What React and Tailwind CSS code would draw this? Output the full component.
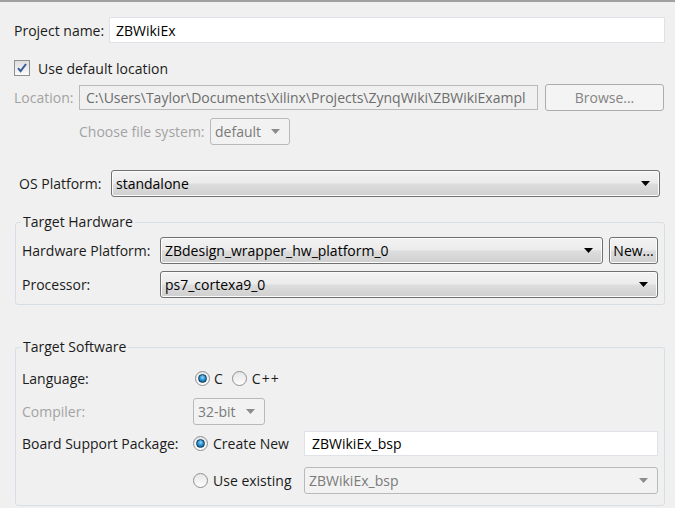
import React from "react";

const font = { fontFamily: '"Open Sans", "Noto Sans", sans-serif' };

const Arrow = ({ disabled }) => (
  <svg width="9" height="5" viewBox="0 0 9 5" className="shrink-0">
    <path d="M0 0 H9 L4.5 5 Z" fill={disabled ? "#8c8c8c" : "#000"} />
  </svg>
);

const Combo = ({ value, className = "", disabled = false }) =>
  disabled ? (
    <div
      className={`flex items-center justify-between h-[27px] pl-[4px] pr-[9px] border border-[#b9b9b9] rounded-[3px] bg-[#f2f2f2] text-[#7a7a7a] ${className}`}
    >
      <span>{value}</span>
      <Arrow disabled />
    </div>
  ) : (
    <div
      className={`flex items-center justify-between h-[27px] pl-[4px] pr-[9px] border border-[#707070] rounded-[3px] text-black bg-[linear-gradient(to_bottom,#f3f3f3_0%,#ebebeb_48%,#dddddd_52%,#cfcfcf_100%)] shadow-[inset_0_0_0_1px_#fcfcfc] ${className}`}
    >
      <span>{value}</span>
      <Arrow />
    </div>
  );

const Radio = ({ checked }) => (
  <div className="w-[15px] h-[15px] rounded-full border border-[#8e8f8f] bg-[linear-gradient(to_bottom,#e6e6e6,#fdfdfd)] flex items-center justify-center shrink-0">
    {checked && (
      <div className="w-[9px] h-[9px] rounded-full border border-[#103f5e] bg-[radial-gradient(circle_at_50%_35%,#8fd6ff_0%,#1d86c5_55%,#0d4f7d_100%)]" />
    )}
  </div>
);

const App = () => {
  return (
    <div
      className="w-[675px] h-[508px] overflow-hidden bg-[#f0f0f0] border-t-2 border-[#a0a0a0] text-[14px] text-[#1b1b1b]"
      style={font}
    >
      {/* Project name */}
      <div className="flex items-center pl-[14px] pr-[10px] mt-[15px]">
        <span className="w-[95px] shrink-0">Project name:</span>
        <div className="flex-1 h-[26px] flex items-center pl-[6px] bg-white border border-[#dfe3e8] text-black">
          ZBWikiEx
        </div>
      </div>

      {/* Default location */}
      <div className="flex items-center pl-[14px] mt-[17px] h-[16px]">
        <div className="w-[16px] h-[16px] border border-[#8e8f8f] bg-[linear-gradient(to_bottom,#dedede,#fbfbfb)] flex items-center justify-center shrink-0">
          <svg width="12" height="12" viewBox="0 0 12 12">
            <path d="M2 6.2 L4.6 9.2 L10 2" fill="none" stroke="#3b5a9a" strokeWidth="2" />
          </svg>
        </div>
        <span className="ml-[8px]">Use default location</span>
      </div>

      {/* Location */}
      <div className="flex items-center pl-[14px] pr-[11px] mt-[8px] h-[27px]">
        <span className="w-[65px] shrink-0 text-[#a3a3a3]">Location:</span>
        <div className="flex-1 h-[25px] flex items-center pl-[6px] bg-[#f0f0f0] border border-[#b9b9b9] text-[#6d6d6d] overflow-hidden whitespace-nowrap">
          C:\Users\Taylor\Documents\Xilinx\Projects\ZynqWiki\ZBWikiExampl
        </div>
        <div className="ml-[7px] w-[119px] h-[27px] flex items-center justify-center border border-[#adadad] rounded-[3px] bg-[#f4f4f4] text-[#838383]">
          Browse...
        </div>
      </div>

      {/* File system */}
      <div className="flex items-center pl-[79px] mt-[7px]">
        <span className="w-[131px] shrink-0 text-[#a3a3a3]">Choose file system:</span>
        <Combo value="default" disabled className="w-[80px]" />
      </div>

      {/* OS Platform */}
      <div className="flex items-center pl-[19px] pr-[15px] mt-[25px]">
        <span className="w-[92px] shrink-0">OS Platform:</span>
        <Combo value="standalone" className="flex-1" />
      </div>

      {/* Target Hardware */}
      <fieldset className="mx-[10px] ml-[15px] mt-[15px] border border-[#d5dfe5] rounded-[3px] px-[6px] pb-[6px]">
        <legend className="-ml-[1px] px-[2px] leading-[20px]">Target Hardware</legend>
        <div className="flex items-center mt-[5px]">
          <span className="w-[138px] shrink-0">Hardware Platform:</span>
          <Combo value="ZBdesign_wrapper_hw_platform_0" className="flex-1" />
          <div className="ml-[6px] w-[49px] h-[27px] flex items-center justify-center border border-[#707070] rounded-[3px] bg-[linear-gradient(to_bottom,#f3f3f3_0%,#ebebeb_48%,#dddddd_52%,#cfcfcf_100%)] shadow-[inset_0_0_0_1px_#fcfcfc] text-black">
            New...
          </div>
        </div>
        <div className="flex items-center mt-[7px]">
          <span className="w-[138px] shrink-0">Processor:</span>
          <Combo value="ps7_cortexa9_0" className="flex-1" />
        </div>
      </fieldset>

      {/* Target Software */}
      <fieldset className="mx-[10px] ml-[15px] mt-[32px] border border-[#d5dfe5] rounded-[3px] px-[6px] pb-[11px]">
        <legend className="-ml-[1px] px-[2px] leading-[20px]">Target Software</legend>
        <div className="flex items-center mt-[11px] h-[20px]">
          <span className="w-[173px] shrink-0">Language:</span>
          <div className="flex items-center">
            <Radio checked />
            <span className="ml-[4px]">C</span>
            <div className="ml-[9px]">
              <Radio />
            </div>
            <span className="ml-[5px] tracking-[1px]">C++</span>
          </div>
        </div>
        <div className="flex items-center mt-[10px]">
          <span className="w-[171px] shrink-0 text-[#a3a3a3]">Compiler:</span>
          <Combo value="32-bit" disabled className="w-[72px] h-[26px]" />
        </div>
        <div className="flex items-center mt-[6px]">
          <span className="w-[171px] shrink-0">Board Support Package:</span>
          <div className="w-[111px] shrink-0 flex items-center">
            <Radio checked />
            <span className="ml-[5px]">Create New</span>
          </div>
          <div className="flex-1 h-[25px] flex items-center pl-[7px] bg-white border border-[#dfe3e8] text-black">
            ZBWikiEx_bsp
          </div>
        </div>
        <div className="flex items-center mt-[11px]">
          <span className="w-[171px] shrink-0" />
          <div className="w-[111px] shrink-0 flex items-center">
            <Radio />
            <span className="ml-[5px]">Use existing</span>
          </div>
          <Combo value="ZBWikiEx_bsp" disabled className="flex-1" />
        </div>
      </fieldset>
    </div>
  );
};

export default App;
